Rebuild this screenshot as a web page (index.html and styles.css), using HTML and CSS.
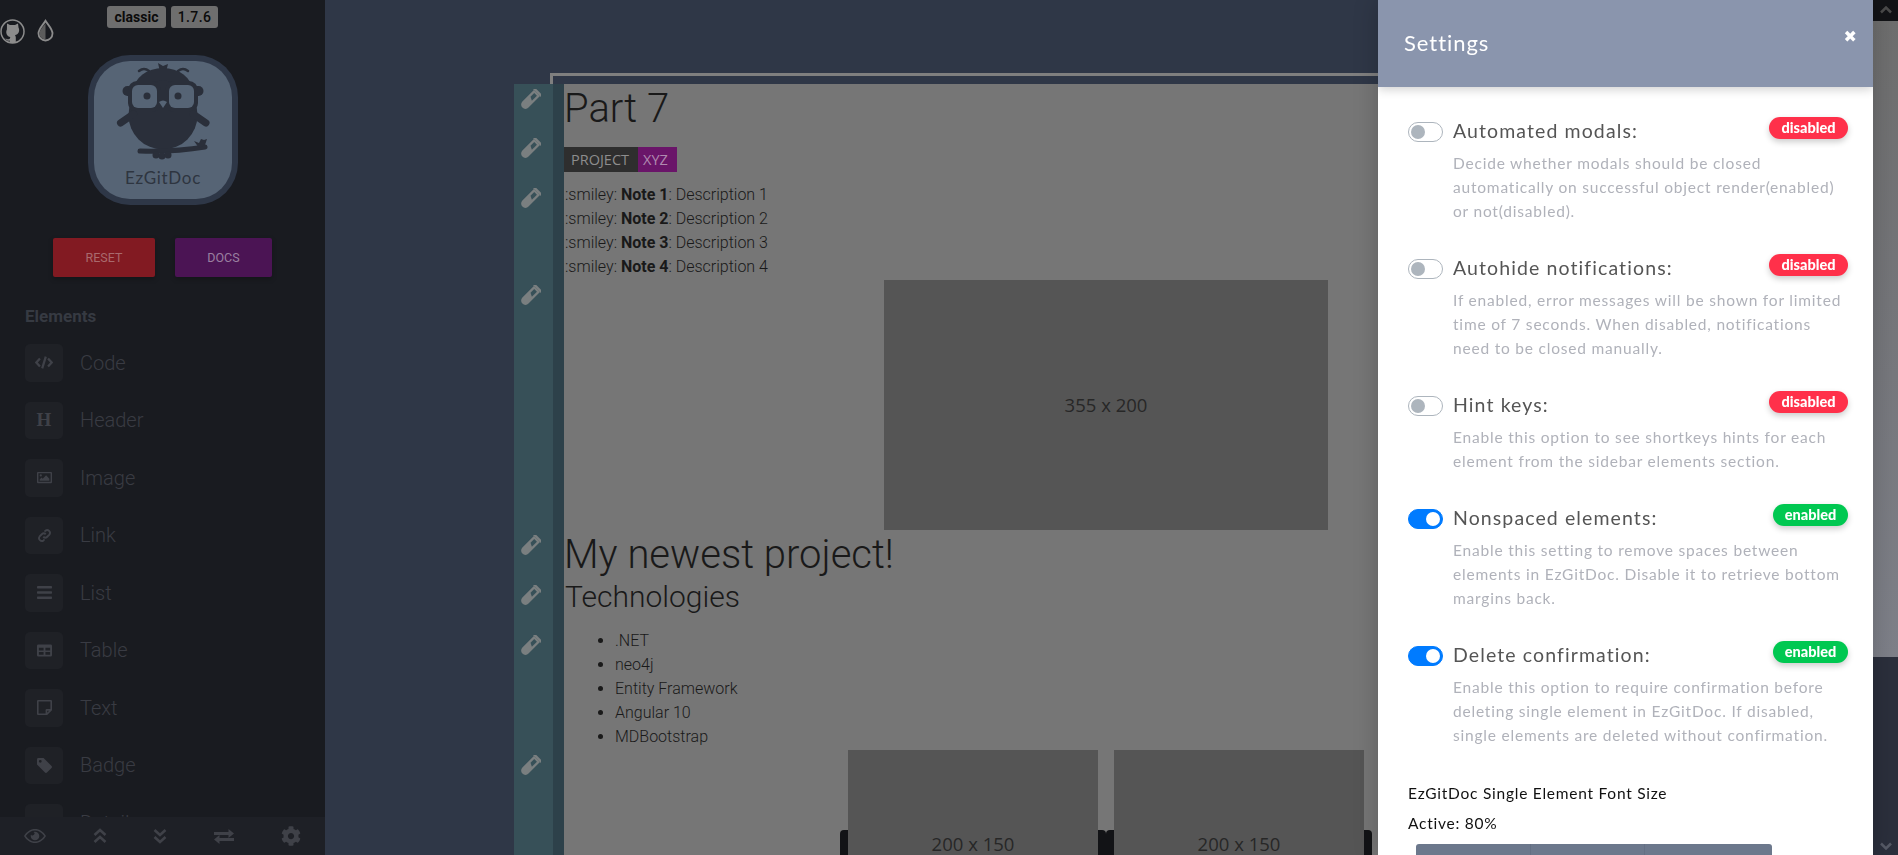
FILE: index.html
```html
<!DOCTYPE html>
<html lang="en">
<head>
    <meta charset="UTF-8">
    <meta name="viewport" content="width=device-width, initial-scale=1.0">
    <title>EzGitDoc</title>
    <link rel="stylesheet" href="styles.css">
</head>
<body>
    <svg class="sprites" width="0" height="0">
        <symbol id="vial" viewBox="0 0 24 24">
            <g transform="rotate(45 12 12)">
                <rect x="6" y="-1.500" width="12" height="2.500" rx="1"/>
                <path d="M7.500 1h9v17a4.500 4.500 0 0 1-9 0z"/>
                <path class="vial-gap" d="M10 3h4v7.500l-4-2z"/>
            </g>
        </symbol>
    </svg>

    <div class="app">
        <aside class="sidebar">
            <div class="top-bar">
                <div class="top-links">
                    <svg class="github" viewBox="0 0 25 25">
                        <circle cx="12.500" cy="12.500" r="11.500"/>
                        <path class="cat" d="M7 4.500l3 1.500h5l3-1.500.5 4c1 1.500 1 5-1 6.500-1 .8-2 1-2.500 1.300.5.500.8 1.200.8 2.200V24H9.700v-2.500c-2.500.5-3.500-.5-4.200-2.200.8.500 1.500 1.500 4.200.8 0-.8.300-1.500.7-1.800-.5-.3-1.500-.5-2.500-1.300-2-1.500-2-5-1-6.500z"/>
                    </svg>
                    <svg class="drop" viewBox="0 0 17 23">
                        <path class="drop-line" d="M8.500 1.800C6 6 1.500 9.800 1.500 14.500a7 7 0 0 0 14 0C15.500 9.800 11 6 8.500 1.800z"/>
                        <path class="drop-fill" d="M8.500 4.500v16a6 6 0 0 1-6-6c0-3.500 3.500-6.500 6-10z"/>
                    </svg>
                </div>
                <span class="top-badge badge-classic">classic</span>
                <span class="top-badge badge-version">1.7.6</span>
            </div>

            <div class="logo">
                <div class="logo-inner">
                    <svg class="owl" viewBox="113 61 100 105">
                        <path d="M160 72l-2-9 5 3 5-2-2 8z"/>
                        <path class="owl-line" d="M139 71q5-4 10 0M178 71q5-4 10 0"/>
                        <ellipse cx="163" cy="90" rx="29" ry="22"/>
                        <ellipse cx="163" cy="115" rx="34.500" ry="34.500"/>
                        <rect x="122.500" y="86" width="81" height="10" rx="5"/>
                        <rect x="128" y="81" width="33" height="31" rx="9"/>
                        <rect x="165" y="81" width="33" height="31" rx="9"/>
                        <rect class="owl-light" x="132" y="85" width="25" height="23" rx="6"/>
                        <rect class="owl-light" x="169" y="85" width="25" height="23" rx="6"/>
                        <circle cx="147" cy="96" r="3.500"/>
                        <circle cx="178" cy="96" r="3.500"/>
                        <path class="owl-light" d="M159 102q4-3 8 0l-4 6z"/>
                        <path class="owl-wing" d="M120.500 123l13-9M206 123l-13-9"/>
                        <path class="owl-branch" d="M140 151q35 1 65-4"/>
                        <path d="M194 141l5 2 2-4 3 1 3-1-2 6-6 3z"/>
                        <circle cx="156" cy="155" r="3.500"/>
                        <circle cx="162" cy="156" r="3.500"/>
                        <circle cx="168" cy="155" r="3.500"/>
                    </svg>
                    <span class="logo-name">EzGitDoc</span>
                </div>
            </div>

            <div class="side-buttons">
                <a class="side-btn btn-reset">RESET</a>
                <a class="side-btn btn-docs">DOCS</a>
            </div>

            <h4 class="elements-title">Elements</h4>
            <ul class="elements">
                <li><span class="el-icon"><svg class="el-code" viewBox="0 0 20 16"><path class="el-stroke" d="M5.500 3.500L1.500 8l4 4.500M14.500 3.500l4 4.500-4 4.500M12 1.500L8 14.500"/></svg></span>Code</li>
                <li><span class="el-icon el-heading">H</span>Header</li>
                <li><span class="el-icon"><svg viewBox="0 0 16 13"><path fill-rule="evenodd" d="M0 1.500A1 1 0 0 1 1 .5h14a1 1 0 0 1 1 1v10a1 1 0 0 1-1 1H1a1 1 0 0 1-1-1zm1.500.5v9h13V2z"/><circle cx="4" cy="4.300" r="1.200"/><path d="M2.800 10V8.500l2-2 1.300 1.200 3.600-3.500 3.500 3.500V10z"/></svg></span>Image</li>
                <li><span class="el-icon"><svg viewBox="0 0 16 16"><path class="el-stroke el-thick" d="M6.700 9.300a3 3 0 0 0 4.200 0l2.300-2.300a3 3 0 0 0-4.200-4.200l-1 1M9.300 6.700a3 3 0 0 0-4.200 0L2.800 9a3 3 0 0 0 4.200 4.200l1-1"/></svg></span>Link</li>
                <li><span class="el-icon"><svg viewBox="0 0 14 12"><rect y="0" width="14" height="2.200" rx=".6"/><rect y="4.900" width="14" height="2.200" rx=".6"/><rect y="9.800" width="14" height="2.200" rx=".6"/></svg></span>List</li>
                <li><span class="el-icon"><svg viewBox="0 0 16 13"><path fill-rule="evenodd" d="M1.500 0h13A1.500 1.500 0 0 1 16 1.500v10a1.500 1.500 0 0 1-1.500 1.500h-13A1.500 1.500 0 0 1 0 11.500v-10A1.500 1.500 0 0 1 1.500 0zM2 3.500v3h5v-3zm7 0v3h5v-3zM2 8v3h5V8zm7 0v3h5V8z"/></svg></span>Table</li>
                <li><span class="el-icon"><svg viewBox="0 0 14 14"><path fill-rule="evenodd" d="M1 0h12a1 1 0 0 1 1 1v8.500L9.500 14H1a1 1 0 0 1-1-1V1a1 1 0 0 1 1-1zm.500 1.500v11H8V9.500a1 1 0 0 1 1-1h3.500v-7zM9.500 10v1.900l1.900-1.900z"/></svg></span>Text</li>
                <li><span class="el-icon"><svg viewBox="0 0 16 16"><path fill-rule="evenodd" d="M0 1.500A1.500 1.500 0 0 1 1.500 0H7l8.500 8.500a1.500 1.500 0 0 1 0 2.100l-4.900 4.900a1.500 1.500 0 0 1-2.100 0L0 7zM3.500 5a1.500 1.500 0 1 0 0-3 1.500 1.500 0 0 0 0 3z"/></svg></span>Badge</li>
                <li><span class="el-icon"></span>Details</li>
            </ul>

            <div class="side-footer">
                <svg class="foot-icon foot-eye" viewBox="0 0 22 14"><path fill-rule="evenodd" d="M11 0c4.500 0 8.500 2.700 11 7-2.500 4.300-6.500 7-11 7S2.500 11.300 0 7c2.500-4.300 6.500-7 11-7zM11 1.500C7.500 1.500 4 3.500 1.800 7 4 10.500 7.500 12.500 11 12.500s7-2 9.200-5.500C18 3.500 14.500 1.500 11 1.500z"/><path d="M11 2.700a4.300 4.300 0 1 1-4.300 4.300c0-.6.100-1.100.3-1.600a1.800 1.800 0 1 0 2.500-2.400c.5-.2 1-.3 1.500-.3z"/></svg>
                <svg class="foot-icon foot-angle" viewBox="0 0 14 16"><path class="foot-stroke" d="M1.500 7L7 2l5.500 5M1.500 14L7 9l5.500 5"/></svg>
                <svg class="foot-icon foot-angle" viewBox="0 0 14 16"><path class="foot-stroke" d="M1.500 2L7 7l5.500-5M1.500 9L7 14l5.500-5"/></svg>
                <svg class="foot-icon foot-swap" viewBox="0 0 20 15"><path d="M0 3h14.500V0L20 4.500 14.500 9V6H0zM20 9H5.500V6L0 10.500 5.500 15v-3H20z"/></svg>
                <svg class="foot-icon foot-gear" viewBox="0 0 512 512"><path d="M487.4 315.7l-42.6-24.6c4.3-23.2 4.3-47 0-70.2l42.6-24.6c4.9-2.8 7.1-8.6 5.5-14-11.1-35.6-30-67.8-54.7-94.6-3.8-4.1-10-5.1-14.800-2.3L380.800 110c-17.900-15.400-38.500-27.300-60.800-35.100V25.800c0-5.600-3.900-10.500-9.400-11.700-36.700-8.200-74.300-7.800-109.200 0-5.500 1.200-9.400 6.100-9.400 11.700V75c-22.200 7.900-42.800 19.800-60.800 35.100L88.700 85.500c-4.900-2.800-11-1.900-14.800 2.300-24.700 26.700-43.600 58.900-54.700 94.600-1.700 5.400.6 11.200 5.500 14L67.300 221c-4.300 23.200-4.300 47 0 70.200l-42.600 24.600c-4.900 2.800-7.100 8.600-5.500 14 11.100 35.600 30 67.800 54.700 94.600 3.800 4.100 10 5.100 14.800 2.300l42.600-24.600c17.900 15.400 38.500 27.300 60.800 35.100v49.200c0 5.600 3.900 10.500 9.400 11.700 36.700 8.200 74.300 7.800 109.200 0 5.500-1.200 9.400-6.100 9.400-11.700v-49.200c22.200-7.900 42.800-19.800 60.800-35.100l42.600 24.600c4.900 2.800 11 1.900 14.800-2.300 24.700-26.700 43.600-58.900 54.700-94.600 1.500-5.500-.7-11.300-5.600-14.100zM256 336c-44.100 0-80-35.900-80-80s35.900-80 80-80 80 35.900 80 80-35.900 80-80 80z"/></svg>
            </div>
        </aside>

        <main class="workspace">
            <div class="frame-top"></div>
            <div class="editor">
                <section class="block block-title">
                    <div class="gutter"><svg class="vial"><use href="#vial"/></svg></div>
                    <div class="block-body"><h1>Part 7</h1></div>
                </section>
                <section class="block block-shield">
                    <div class="gutter"><svg class="vial"><use href="#vial"/></svg></div>
                    <div class="block-body"><span class="shield"><span class="shield-key">PROJECT</span><span class="shield-val">XYZ</span></span></div>
                </section>
                <section class="block block-notes">
                    <div class="gutter"><svg class="vial"><use href="#vial"/></svg></div>
                    <div class="block-body">
                        <p>:smiley: <b>Note 1</b>: Description 1</p>
                        <p>:smiley: <b>Note 2</b>: Description 2</p>
                        <p>:smiley: <b>Note 3</b>: Description 3</p>
                        <p>:smiley: <b>Note 4</b>: Description 4</p>
                    </div>
                </section>
                <section class="block block-picture">
                    <div class="gutter"><svg class="vial"><use href="#vial"/></svg></div>
                    <div class="block-body"><div class="placeholder placeholder-big">355 x 200</div></div>
                </section>
                <section class="block block-title">
                    <div class="gutter"><svg class="vial"><use href="#vial"/></svg></div>
                    <div class="block-body"><h1>My newest project!</h1></div>
                </section>
                <section class="block block-title">
                    <div class="gutter"><svg class="vial"><use href="#vial"/></svg></div>
                    <div class="block-body"><h2>Technologies</h2></div>
                </section>
                <section class="block block-list">
                    <div class="gutter"><svg class="vial"><use href="#vial"/></svg></div>
                    <div class="block-body">
                        <ul>
                            <li>.NET</li>
                            <li>neo4j</li>
                            <li>Entity Framework</li>
                            <li>Angular 10</li>
                            <li>MDBootstrap</li>
                        </ul>
                    </div>
                </section>
                <section class="block block-pair">
                    <div class="gutter"><svg class="vial"><use href="#vial"/></svg></div>
                    <div class="block-body">
                        <div class="pair-bars"><span></span><span></span></div>
                        <div class="placeholder placeholder-small">200 x 150</div>
                        <div class="placeholder placeholder-small">200 x 150</div>
                    </div>
                </section>
            </div>
        </main>

        <div class="page-scroll">
            <div class="scroll-btn"><svg viewBox="0 0 12 8"><path d="M1 6.500l5-5 5 5"/></svg></div>
            <div class="scroll-thumb"></div>
            <div class="scroll-track"><svg viewBox="0 0 12 8"><path d="M1 1.500l5 5 5-5"/></svg></div>
        </div>
    </div>

    <div class="modal">
        <header class="modal-head">
            <span class="modal-title">Settings</span>
            <span class="modal-close">&#10006;</span>
        </header>
        <div class="modal-body">
            <div class="setting">
                <div class="setting-head">
                    <span class="toggle"></span>
                    <span class="setting-name">Automated modals:</span>
                    <span class="pill pill-off">disabled</span>
                </div>
                <p class="setting-desc">Decide whether modals should be closed automatically on successful object render(enabled) or not(disabled).</p>
            </div>
            <div class="setting">
                <div class="setting-head">
                    <span class="toggle"></span>
                    <span class="setting-name">Autohide notifications:</span>
                    <span class="pill pill-off">disabled</span>
                </div>
                <p class="setting-desc">If enabled, error messages will be shown for limited time of 7 seconds. When disabled, notifications need to be closed manually.</p>
            </div>
            <div class="setting">
                <div class="setting-head">
                    <span class="toggle"></span>
                    <span class="setting-name">Hint keys:</span>
                    <span class="pill pill-off">disabled</span>
                </div>
                <p class="setting-desc">Enable this option to see shortkeys hints for each element from the sidebar elements section.</p>
            </div>
            <div class="setting">
                <div class="setting-head">
                    <span class="toggle toggle-on"></span>
                    <span class="setting-name">Nonspaced elements:</span>
                    <span class="pill pill-on">enabled</span>
                </div>
                <p class="setting-desc">Enable this setting to remove spaces between elements in EzGitDoc. Disable it to retrieve bottom margins back.</p>
            </div>
            <div class="setting">
                <div class="setting-head">
                    <span class="toggle toggle-on"></span>
                    <span class="setting-name">Delete confirmation:</span>
                    <span class="pill pill-on">enabled</span>
                </div>
                <p class="setting-desc">Enable this option to require confirmation before deleting single element in EzGitDoc. If disabled, single elements are deleted without confirmation.</p>
            </div>
            <div class="font-size">
                <p class="font-size-title">EzGitDoc Single Element Font Size</p>
                <p class="font-size-active">Active: 80%</p>
                <div class="btn-group"><span></span><span></span><span></span></div>
            </div>
        </div>
    </div>
</body>
</html>
```

FILE: styles.css
```css
* {
    margin: 0;
    padding: 0;
    box-sizing: border-box;
}

body {
    font-family: 'Roboto', sans-serif;
    height: 100vh;
    overflow: hidden;
    background: #2f3747;
}

.sprites {
    display: block;
    position: absolute;
}

.app {
    display: flex;
    height: 100vh;
}

/* sidebar */
.sidebar {
    width: 325px;
    flex: none;
    display: flex;
    flex-direction: column;
    background: #191b20;
    overflow: hidden;
}

.top-bar {
    display: flex;
    height: 55px;
    flex: none;
    padding-top: 6px;
}

.top-links {
    display: flex;
    gap: 12px;
    margin-top: 13px;
    width: 107px;
}

.github {
    width: 25px;
    height: 25px;
}

.github circle {
    fill: none;
    stroke: #8c8c8c;
    stroke-width: 1.5;
}

.github .cat {
    fill: #8c8c8c;
}

.drop {
    width: 17px;
    height: 23px;
}

.drop-line {
    fill: none;
    stroke: #8c8c8c;
    stroke-width: 1.800;
}

.drop-fill {
    fill: #5c5c5c;
}

.top-badge {
    height: 22px;
    line-height: 22px;
    background: #6e6e6e;
    color: #0b0b0b;
    font-size: 14px;
    font-weight: 700;
    text-align: center;
    border-radius: 3px;
}

.badge-classic {
    width: 59px;
    margin-right: 5px;
}

.badge-version {
    width: 47px;
    font-weight: 500;
    letter-spacing: .4px;
}

.logo {
    flex: none;
    width: 150px;
    height: 150px;
    margin-left: 88px;
    padding: 6px;
    background: #2e3747;
    border-radius: 42px;
}

.logo-inner {
    height: 138px;
    background: #566475;
    border-radius: 36px;
    display: flex;
    flex-direction: column;
    align-items: center;
}

.owl {
    display: block;
    width: 100px;
    height: 105px;
    flex: none;
    fill: #2a2f3a;
}

.owl-light {
    fill: #566475;
}

.owl-line,
.owl-wing,
.owl-branch {
    fill: none;
    stroke: #2a2f3a;
    stroke-linecap: round;
}

.owl-line {
    stroke-width: 2.500;
}

.owl-wing {
    stroke-width: 7;
}

.owl-branch {
    stroke-width: 5;
}

.logo-name {
    font-family: 'Lato', sans-serif;
    font-size: 17px;
    line-height: 22px;
    margin-top: 1px;
    letter-spacing: .7px;
    color: #2e3540;
}

.side-buttons {
    display: flex;
    flex: none;
    gap: 20px;
    margin: 33px 0 0 53px;
}

.side-btn {
    height: 39px;
    line-height: 39px;
    text-align: center;
    font-size: 12.500px;
    border-radius: 2px;
    box-shadow: 0 2px 5px rgba(0, 0, 0, 0.25);
}

.btn-reset {
    width: 102px;
    background: #821a22;
    color: #a9696d;
}

.btn-docs {
    width: 97px;
    background: #4b1454;
    color: #9a7fa0;
}

.elements-title {
    flex: none;
    margin: 28px 0 0 25px;
    font-size: 17px;
    line-height: 22px;
    font-weight: 700;
    color: #363a42;
}

.elements {
    flex: 1;
    min-height: 0;
    overflow: hidden;
    list-style: none;
    margin-top: 17px;
    padding-left: 25px;
}

.elements li {
    display: flex;
    align-items: center;
    height: 37.500px;
    margin-bottom: 20px;
    font-size: 20px;
    font-weight: 300;
    color: #393b43;
}

.el-icon {
    width: 38px;
    height: 37.500px;
    margin-right: 17px;
    background: #1f2126;
    border-radius: 5px;
    display: flex;
    align-items: center;
    justify-content: center;
}

.el-icon svg {
    width: 15px;
    height: 15px;
    fill: #3f4148;
}

.el-icon .el-code {
    width: 18px;
}

.el-stroke {
    fill: none;
    stroke: #3f4148;
    stroke-width: 2.500;
}

.el-thick {
    stroke-width: 2;
}

.el-heading {
    font-family: 'Liberation Serif', serif;
    font-size: 19px;
    font-weight: 700;
    color: #3f4148;
}

.side-footer {
    height: 38px;
    flex: none;
    position: relative;
    display: flex;
    align-items: center;
    background: #1e2026;
}

.foot-icon {
    fill: #3f4148;
    flex: none;
}

.foot-eye {
    width: 22px;
    height: 14px;
    margin-left: 24px;
}

.foot-angle {
    width: 14px;
    height: 16px;
}

.foot-eye + .foot-angle {
    margin-left: 47px;
}

.foot-angle + .foot-angle {
    margin-left: 46px;
}

.foot-stroke {
    fill: none;
    stroke: #3f4148;
    stroke-width: 2.600;
}

.foot-swap {
    width: 20px;
    height: 15px;
    margin-left: 47px;
}

.foot-gear {
    width: 20px;
    height: 20px;
    margin-left: 47px;
}

/* editor */
.workspace {
    flex: 1;
    min-width: 0;
    overflow: hidden;
    padding-top: 73px;
}

.frame-top {
    height: 11px;
    margin-left: 225px;
    border-top: 3px solid #7f7f7f;
    border-left: 3px solid #7f7f7f;
}

.editor {
    margin-left: 189px;
    background: #767676;
}

.block {
    display: flex;
}

.gutter {
    width: 50px;
    flex: none;
    background: #375058;
    border-right: 11px solid #2d414a;
    padding-left: 4px;
}

.vial {
    display: block;
    width: 23px;
    height: 23px;
    fill: #7a7f80;
    margin-top: 5px;
    overflow: visible;
}

.vial-gap {
    fill: #375058;
}

.block-body {
    flex: 1;
    min-width: 0;
    color: #191919;
    font-size: 16px;
    font-weight: 300;
    line-height: 24px;
}

.block-title {
    height: 50px;
}

.block-title:first-child {
    height: 49px;
}

h1 {
    font-size: 40px;
    font-weight: 300;
    line-height: 50px;
}

h2 {
    font-size: 30px;
    font-weight: 300;
    line-height: 40px;
    padding-left: 1px;
    margin-top: -3px;
}

.block-shield {
    height: 50px;
}

.block-shield .block-body {
    padding-top: 14px;
}

.shield {
    display: flex;
    height: 25px;
    line-height: 25px;
    font-family: 'Open Sans', sans-serif;
    font-size: 14.500px;
    font-weight: 400;
}

.shield-key {
    width: 74px;
    background: #2e2e2e;
    color: #8d8d8d;
    padding-left: 7px;
}

.shield-val {
    width: 39px;
    background: #6a1569;
    color: #b08ab0;
    padding-left: 5px;
}

.block-notes {
    height: 97px;
}

.block-notes p {
    padding-left: 1px;
}

.block-notes b {
    font-weight: 700;
}

.block-picture {
    height: 250px;
}

.block-picture .block-body {
    padding-left: 320px;
}

.placeholder {
    display: flex;
    align-items: center;
    justify-content: center;
    background: #555555;
    color: #272727;
    font-family: 'Open Sans', sans-serif;
    font-weight: 400;
    flex: none;
}

.placeholder-big {
    width: 444px;
    height: 250px;
    font-size: 18.500px;
}

.block-list {
    height: 120px;
}

.block-list ul {
    padding-left: 51px;
    margin-top: -1px;
}

.block-pair {
    height: 200px;
}

.block-pair .block-body {
    position: relative;
    display: flex;
    gap: 16px;
    padding-left: 284px;
}

.placeholder-small {
    position: relative;
    width: 250px;
    height: 188px;
    font-size: 18.500px;
}

.pair-bars {
    position: absolute;
    left: 276px;
    top: 80px;
    display: flex;
}

.pair-bars span {
    display: block;
    width: 266px;
    height: 60px;
    background: #121316;
    border-radius: 4px;
}

/* page scrollbar */
.page-scroll {
    width: 25px;
    flex: none;
    display: flex;
    flex-direction: column;
}

.page-scroll svg {
    display: block;
    width: 12px;
    height: 8px;
    margin: 6px auto 0;
    fill: none;
    stroke: #4a4a4a;
    stroke-width: 2.500;
}

.scroll-btn {
    height: 21px;
    background: #121316;
}

.scroll-thumb {
    height: 636px;
    background: linear-gradient(#6e6e6e, #7e8089);
}

.scroll-track {
    flex: 1;
    background: #2b2f3c;
    padding-top: 179px;
}

.scroll-track svg {
    margin-top: 6px;
    stroke: #565a66;
}

/* settings modal */
.modal {
    position: fixed;
    top: 0;
    right: 25px;
    bottom: 0;
    width: 495px;
    background: #fff;
    overflow: hidden;
    box-shadow: 0 0 24px rgba(0, 0, 0, 0.2);
    font-family: 'Lato', sans-serif;
}

.modal-head {
    position: relative;
    height: 87px;
    padding: 29px 0 0 26px;
    background: #8a95ad;
    box-shadow: 0 2px 10px rgba(0, 0, 0, 0.2);
    color: #fff;
}

.modal-title {
    font-size: 22px;
    line-height: 28px;
    letter-spacing: .95px;
}

.modal-close {
    position: absolute;
    top: 27px;
    right: 16px;
    font-family: 'DejaVu Sans', sans-serif;
    font-size: 16px;
    line-height: 20px;
}

.modal-body {
    padding: 30px 25px 0 30px;
}

.setting {
    margin-bottom: 31px;
}

.setting-head {
    display: flex;
    align-items: flex-start;
    height: 34px;
}

.toggle {
    position: relative;
    flex: none;
    width: 35px;
    height: 20px;
    margin: 5px 10px 0 0;
    border: 1px solid #adb5bd;
    border-radius: 10px;
    background: #fff;
}

.toggle::after {
    content: "";
    position: absolute;
    left: 2px;
    top: 2px;
    width: 14px;
    height: 14px;
    border-radius: 50%;
    background: #adb5bd;
}

.toggle-on {
    background: #007bff;
    border-color: #007bff;
}

.toggle-on::after {
    left: 17px;
    background: #fff;
}

.setting-name {
    font-size: 19.500px;
    line-height: 28px;
    letter-spacing: 1.100px;
    color: #555;
}

.pill {
    margin-left: auto;
    height: 22px;
    line-height: 21px;
    font-size: 14.500px;
    font-weight: 900;
    text-align: center;
    color: #fff;
    border-radius: 11px;
    box-shadow: 0 3px 6px rgba(0, 0, 0, 0.2);
}

.pill-off {
    width: 79px;
    background: #ff304a;
}

.pill-on {
    width: 75px;
    background: #00c851;
}

.setting-desc {
    margin-left: 45px;
    font-size: 15.500px;
    line-height: 24px;
    letter-spacing: .8px;
    color: #b0b2ba;
}

.font-size {
    padding-top: 3px;
}

.font-size-title,
.font-size-active {
    font-size: 15.500px;
    line-height: 24px;
    letter-spacing: .75px;
    color: #111;
}

.font-size-active {
    margin-top: 6px;
}

.btn-group {
    display: flex;
    width: 356px;
    height: 40px;
    margin: 9px 0 0 8px;
    border-radius: 3px;
    overflow: hidden;
}

.btn-group span {
    width: 114.500px;
    background: #6c788c;
    border-right: 1px solid #647084;
}

.btn-group span:last-child {
    flex: 1;
    border-right: none;
}
```
